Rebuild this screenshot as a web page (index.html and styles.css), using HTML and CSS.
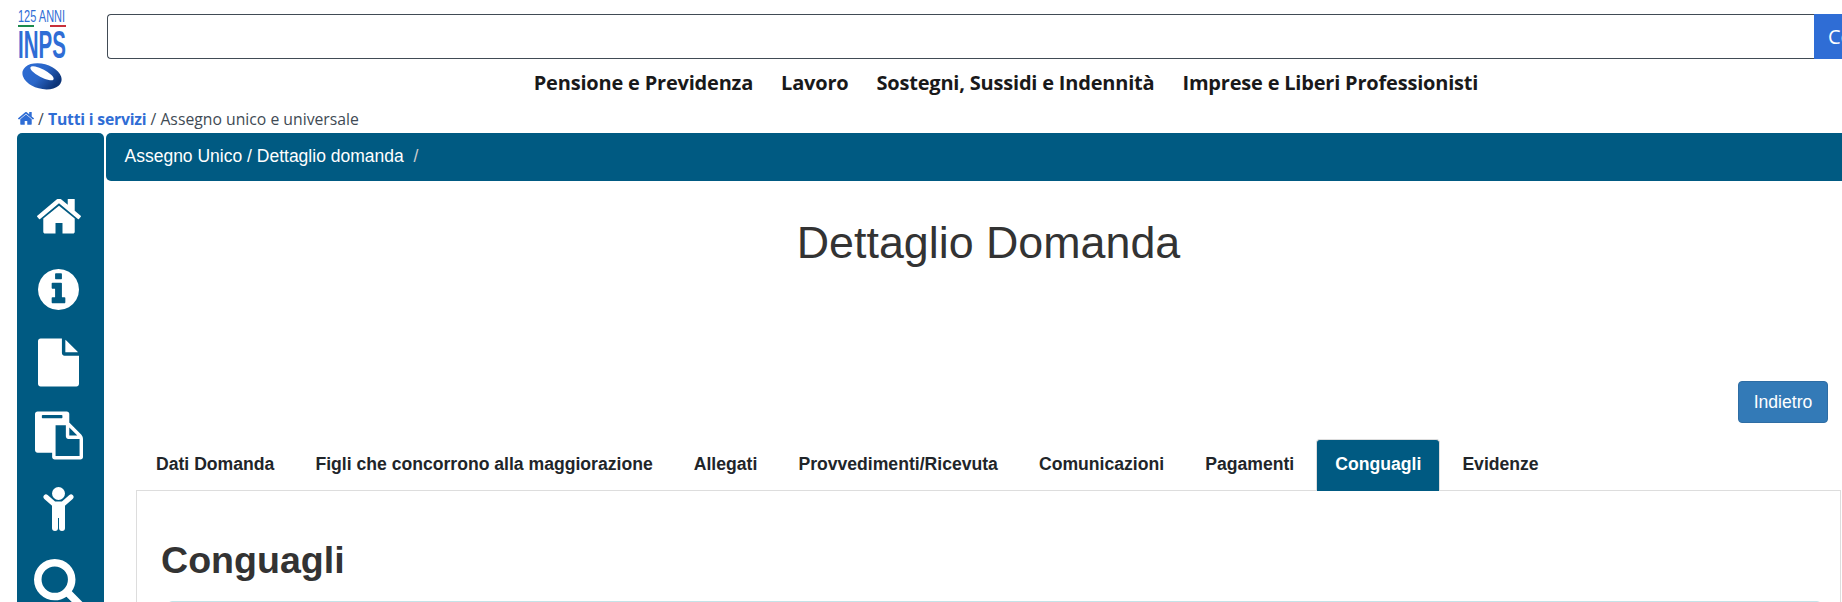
FILE: index.html
```html
<!DOCTYPE html>
<html lang="it">
<head>
<meta charset="UTF-8">
<title>Dettaglio Domanda</title>
<link rel="stylesheet" href="styles.css">
</head>
<body>

<!-- testata -->
<header class="top">
  <svg class="logo" viewBox="0 -6 49 86" role="img" aria-label="INPS 125 anni">
    <defs>
      <linearGradient id="ring" x1="0" y1="0" x2="1" y2="0.3">
        <stop offset="0" stop-color="#2f6dd5"/>
        <stop offset="0.55" stop-color="#2a66c8"/>
        <stop offset="1" stop-color="#0c3478"/>
      </linearGradient>
    </defs>
    <text class="logo-small" transform="translate(0 12) scale(1 1.5)">125 ANNI</text>
    <rect x="0" y="15" width="16" height="2" fill="#1d8a4e"/>
    <rect x="32" y="15" width="16" height="2" fill="#c8303a"/>
    <text class="logo-big" transform="translate(0 48) scale(1 1.9)">INPS</text>
    <ellipse cx="24" cy="66.300" rx="20" ry="12.500" transform="rotate(15 24 66.300)" fill="url(#ring)"/>
    <ellipse cx="24" cy="63.300" rx="13" ry="4" transform="rotate(28 24 63.300)" fill="#fff"/>
  </svg>
  <div class="top-col">
    <form class="search">
      <input class="search-input" type="text">
      <button class="search-btn" type="button">Cerca</button>
    </form>
    <nav class="main-nav">
      <a href="#">Pensione e Previdenza</a>
      <a href="#">Lavoro</a>
      <a href="#">Sostegni, Sussidi e Indennità</a>
      <a href="#">Imprese e Liberi Professionisti</a>
    </nav>
  </div>
</header>

<div class="crumbs">
  <a href="#"><svg class="crumb-home" viewBox="90 280 1612 1260"><path d="M1472 992v480q0 26-19 45t-45 19h-384v-384h-256v384h-384q-26 0-45-19t-19-45v-480q0-1 .5-3t.5-3l575-474 575 474q1 2 1 6zm223-69l-62 74q-8 9-21 11h-3q-13 0-21-7l-692-577-692 577q-12 8-24 7-13-2-21-11l-62-74q-8-10-7-23.500t11-21.500l719-599q32-26 76-26t76 26l244 204v-195q0-14 9-23t23-9h192q14 0 23 9t9 23v408l219 182q10 8 11 21.500t-7 23.500z"/></svg></a>
  / <a href="#">Tutti i servizi</a> / Assegno unico e universale
</div>

<div class="layout">
  <aside class="sidebar">
    <a class="side-item" href="#"><svg class="ic-home" viewBox="90 280 1612 1260"><path d="M1472 992v480q0 26-19 45t-45 19h-384v-384h-256v384h-384q-26 0-45-19t-19-45v-480q0-1 .5-3t.5-3l575-474 575 474q1 2 1 6zm223-69l-62 74q-8 9-21 11h-3q-13 0-21-7l-692-577-692 577q-12 8-24 7-13-2-21-11l-62-74q-8-10-7-23.500t11-21.500l719-599q32-26 76-26t76 26l244 204v-195q0-14 9-23t23-9h192q14 0 23 9t9 23v408l219 182q10 8 11 21.500t-7 23.500z"/></svg></a>
    <a class="side-item" href="#"><svg class="ic-info" viewBox="128 128 1536 1536"><path d="M1152 1376v-160q0-14-9-23t-23-9h-96v-512q0-14-9-23t-23-9h-320q-14 0-23 9t-9 23v160q0 14 9 23t23 9h96v320h-96q-14 0-23 9t-9 23v160q0 14 9 23t23 9h448q14 0 23-9t9-23zm-128-896v-160q0-14-9-23t-23-9h-192q-14 0-23 9t-9 23v160q0 14 9 23t23 9h192q14 0 23-9t9-23zm640 416q0 209-103 385.500t-279.500 279.500-385.500 103-385.500-103-279.500-279.500-103-385.500 103-385.500 279.500-279.500 385.500-103 385.500 103 279.500 279.500 103 385.500z"/></svg></a>
    <a class="side-item" href="#"><svg class="ic-file" viewBox="128 0 1536 1792"><path d="M1152 512v-472q22 14 36 28l408 408q14 14 28 36h-472zm-128 32q0 40 28 68t68 28h544v1056q0 40-28 68t-68 28h-1344q-40 0-68-28t-28-68v-1600q0-40 28-68t68-28h800v544z"/></svg></a>
    <a class="side-item" href="#"><svg class="ic-paste" viewBox="0 0 1792 1792"><path d="M768 1664h896v-640h-416q-40 0-68-28t-28-68v-416h-384v1152zm256-1440v-64q0-13-9.500-22.500t-22.500-9.500h-704q-13 0-22.500 9.500t-9.500 22.500v64q0 13 9.500 22.500t22.500 9.500h704q13 0 22.500-9.500t9.500-22.500zm256 672h299l-299-299v299zm512 128v672q0 40-28 68t-68 28h-960q-40 0-68-28t-28-68v-160h-544q-40 0-68-28t-28-68v-1344q0-40 28-68t68-28h1088q40 0 68 28t28 68v328q21 13 36 28l408 408q28 28 48 76t20 88z"/></svg></a>
    <a class="side-item" href="#"><svg class="ic-child" viewBox="0 0 31 44">
      <circle cx="15.500" cy="6.500" r="6.500"/>
      <path class="child-arms" d="M3 10l8 7h9l8-7"/>
      <rect x="9" y="15" width="13" height="16"/>
      <rect x="9" y="24" width="6" height="20" rx="3"/>
      <rect x="16" y="24" width="6" height="20" rx="3"/>
    </svg></a>
    <a class="side-item" href="#"><svg class="ic-search" viewBox="64 64 1664 1664"><path d="M1216 832q0-185-131.500-316.500t-316.500-131.500-316.500 131.500-131.500 316.500 131.500 316.500 316.500 131.500 316.500-131.500 131.500-316.500zm512 832q0 52-38 90t-90 38q-54 0-90-38l-343-342q-179 124-399 124-143 0-273.500-55.500t-225-150-150-225-55.500-273.500 55.500-273.500 150-225 225-150 273.500-55.500 273.500 55.500 225 150 150 225 55.500 273.500q0 220-124 399l343 343q37 37 37 90z"/></svg></a>
  </aside>

  <main class="main">
    <div class="title-bar">Assegno Unico / Dettaglio domanda <span class="bar-sep">/</span></div>
    <div class="content">
      <h1 class="page-title">Dettaglio Domanda</h1>
      <div class="actions">
        <button class="btn" type="button">Indietro</button>
      </div>
      <ul class="tabs">
        <li class="tab">Dati Domanda</li>
        <li class="tab">Figli che concorrono alla maggiorazione</li>
        <li class="tab">Allegati</li>
        <li class="tab">Provvedimenti/Ricevuta</li>
        <li class="tab">Comunicazioni</li>
        <li class="tab">Pagamenti</li>
        <li class="tab active">Conguagli</li>
        <li class="tab">Evidenze</li>
      </ul>
      <section class="panel">
        <h2 class="panel-title">Conguagli</h2>
        <div class="alert"></div>
      </section>
    </div>
  </main>
</div>

</body>
</html>
```

FILE: styles.css
```css
html, body {
  margin: 0;
  height: 602px;
  overflow: hidden;
}
body {
  font-family: "Liberation Sans", Arial, sans-serif;
  background-color: #fff;
  color: #333;
}
a {
  text-decoration: none;
}

/* testata */
.top {
  display: flex;
  align-items: flex-start;
  padding-left: 18px;
}
.logo {
  width: 49px;
  height: 86px;
  margin-top: 4px;
  flex: none;
}
.logo-small {
  font-size: 11px;
  fill: #2f6dd5;
}
.logo-big {
  font-size: 20.500px;
  font-weight: 700;
  fill: #2f6dd5;
}
.top-col {
  width: 1798px;
  margin-left: 40px;
  padding-top: 14px;
  flex: none;
}
.search {
  display: flex;
  height: 45px;
}
.search-input {
  flex: 1;
  box-sizing: border-box;
  height: 45px;
  border: 1px solid #414b55;
  border-right: none;
  border-radius: 4px 0 0 4px;
  background-color: #fff;
}
.search-btn {
  width: 91px;
  height: 45px;
  border: none;
  background-color: #2f6dd5;
  color: #fff;
  font-family: "Open Sans", sans-serif;
  font-size: 20px;
  text-align: left;
  padding: 0 0 0 14px;
}
.main-nav {
  display: flex;
  justify-content: center;
  gap: 28px;
  margin-top: 11px;
  font-family: "Open Sans", sans-serif;
  font-weight: 700;
  font-size: 20px;
  letter-spacing: -0.2px;
  line-height: 26px;
}
.main-nav a {
  color: #19191a;
}

/* briciole */
.crumbs {
  margin-top: 11px;
  padding-left: 18px;
  height: 26px;
  line-height: 24px;
  font-family: "Open Sans", sans-serif;
  font-size: 15.750px;
  color: #404a54;
}
.crumbs a {
  color: #2f6dd5;
  font-weight: 700;
  letter-spacing: -0.2px;
}
.crumb-home {
  width: 16px;
  height: 13px;
  fill: #2f6dd5;
}

/* corpo */
.layout {
  display: flex;
  gap: 2px;
  padding-left: 17px;
}
.sidebar {
  width: 87px;
  height: 469px;
  flex: none;
  padding: 47px 4px 0 0;
  box-sizing: border-box;
  background-color: #005a82;
  border-radius: 5px 5px 0 0;
}
.side-item {
  display: flex;
  justify-content: center;
  align-items: center;
  height: 73px;
}
.side-item svg {
  fill: #fff;
  flex: none;
}
.ic-home { width: 44px; height: 35px; }
.ic-info { width: 41px; height: 41px; }
.ic-file { width: 41px; height: 49px; }
.ic-paste { width: 48px; height: 49px; }
.ic-child { width: 31px; height: 44px; }
.ic-search { width: 49px; height: 49px; }
.child-arms {
  fill: none;
  stroke: #fff;
  stroke-width: 5;
  stroke-linecap: round;
  stroke-linejoin: round;
}

.main {
  width: 1764px;
  flex: none;
}
.title-bar {
  height: 48px;
  line-height: 46px;
  box-sizing: border-box;
  padding-left: 18.500px;
  background-color: #005a82;
  border-radius: 5px 0 0 5px;
  color: #fff;
  font-size: 17.500px;
}
.bar-sep {
  margin-left: 5px;
  color: #ccc;
}
.content {
  padding: 0 29px 0 30px;
}
.page-title {
  margin: 37px 0 114px;
  font-size: 44.800px;
  font-weight: 400;
  line-height: 49px;
  text-align: center;
}
.actions {
  display: flex;
  justify-content: flex-end;
  padding-right: 13px;
}
.btn {
  width: 90px;
  height: 42px;
  padding: 0;
  background-color: #337ab7;
  border: 1px solid #2e6da4;
  border-radius: 4px;
  color: #fff;
  font-family: "Liberation Sans", Arial, sans-serif;
  font-size: 17.600px;
}
.tabs {
  display: flex;
  gap: 3.100px;
  list-style: none;
  margin: 16px 0 -1px;
  padding: 0 0 0 1px;
  position: relative;
}
.tab {
  height: 52px;
  box-sizing: border-box;
  padding: 0 18px;
  border: 1px solid transparent;
  border-bottom: none;
  line-height: 49px;
  font-size: 17.600px;
  font-weight: 700;
  color: #212529;
}
.tab.active {
  background-color: #005a82;
  border-color: #ddd;
  border-radius: 4px 4px 0 0;
  color: #fff;
}
.panel {
  border: 1px solid #ddd;
  border-bottom: none;
  height: 112px;
  box-sizing: border-box;
  padding-top: 49px;
}
.panel-title {
  margin: 0 0 20px 24px;
  font-size: 37.600px;
  font-weight: 700;
  line-height: 41px;
}
.alert {
  margin: 0 19px 0 31px;
  height: 20px;
  border: 1px solid #c4e3e8;
  border-radius: 4px;
  background-color: #e6f4f6;
}
```
